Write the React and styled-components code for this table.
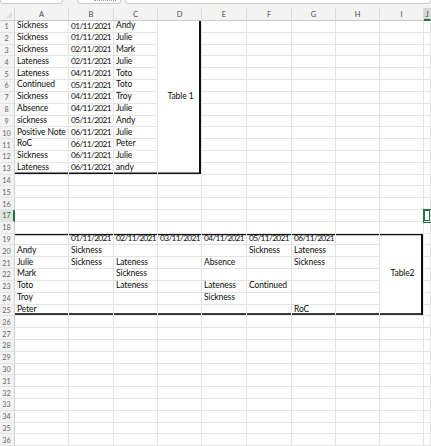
import React from 'react';
import styled, { createGlobalStyle, css } from 'styled-components';

const GlobalStyle = createGlobalStyle`
  html, body { margin: 0; padding: 0; background: #ffffff; }
  body { font-family: Lato, "Liberation Sans", sans-serif; }
`;

const Sheet = styled.div`
  width: 431px;
  height: 446px;
  overflow: hidden;
  background: #ffffff;
  display: flex;
  flex-direction: column;
`;

const TopBar = styled.div`
  height: 4px;
  flex: none;
  display: flex;
  align-items: flex-end;
  overflow: hidden;
  background: #f3f3f3;
`;

const Box = styled.div`
  height: 10px;
  flex: ${p => (p.$grow ? '1' : 'none')};
  width: ${p => (p.$w ? `${p.$w}px` : 'auto')};
  margin-left: ${p => p.$ml || 0}px;
  box-sizing: border-box;
  background: #ffffff;
  border: 1px solid #c9c9c9;
  border-radius: 0 0 3px 3px;
  display: flex;
  align-items: flex-end;
  padding: 0 0 2px 16px;
`;

const Dots = styled.span`
  display: block;
  width: 22px;
  height: 1px;
  border-bottom: 1px dotted #a0a0a0;
`;

const Gap = styled.div`
  height: 4px;
  flex: none;
  background: #f3f3f3;
`;

const Grid = styled.div`
  display: grid;
  grid-template-columns: 15px 54px 45px 44px 44px 45px 45px 44px 44px 44px 1fr;
  grid-template-rows: 13px repeat(36, 11.82px);
  flex: none;
`;

const Corner = styled.div`
  grid-row: 1;
  grid-column: 1;
  background: #f3f3f3;
  border-right: 1px solid #d4d4d4;
  border-bottom: 1px solid #c8c8c8;
  box-sizing: border-box;
  position: relative;
  &::after {
    content: '';
    position: absolute;
    right: 2px;
    bottom: 2px;
    border-left: 6px solid transparent;
    border-bottom: 6px solid #dcdcdc;
  }
`;

const ColHead = styled.div`
  grid-row: 1;
  box-sizing: border-box;
  background: ${p => (p.$active ? '#d6d6d6' : '#f3f3f3')};
  border-right: 1px solid #dcdcdc;
  border-bottom: ${p => (p.$active ? '2px solid #217346' : '1px solid #c8c8c8')};
  font-size: 7.5px;
  color: #4a4a4a;
  display: flex;
  align-items: center;
  justify-content: center;
  padding-top: 1px;
`;

const RowHead = styled.div`
  grid-column: 1;
  box-sizing: border-box;
  background: ${p => (p.$active ? '#e1e1e1' : '#f3f3f3')};
  border-right: ${p => (p.$active ? '2px solid #217346' : '1px solid #d0d0d0')};
  border-bottom: 1px solid #e4e4e4;
  font-size: 7.2px;
  color: ${p => (p.$active ? '#217346' : '#666666')};
  display: flex;
  align-items: center;
  justify-content: center;
  padding-top: 1px;
  padding-right: ${p => (p.$active ? 0 : 1)}px;
`;

const Cell = styled.div`
  box-sizing: border-box;
  border-right: 1px solid #e4e4e4;
  border-bottom: 1px solid #e4e4e4;
  font-size: ${p => (p.$date ? '8.3px' : '8.5px')};
  line-height: 1;
  color: #0c0c0c;
  white-space: nowrap;
  display: flex;
  align-items: ${p => (p.$center ? 'center' : 'flex-end')};
  justify-content: ${p => (p.$center ? 'center' : 'flex-start')};
  padding: 0 0 2px 2px;
  overflow: visible;
  letter-spacing: ${p => (p.$date ? '-0.6px' : '-0.1px')};
  ${p => p.$shadow && css`box-shadow: ${p.$shadow};`}
  ${p =>
    p.$selected &&
    css`
      position: relative;
      z-index: 1;
      box-shadow: 0 0 0 1px #217346, inset 0 0 0 1px #217346;
    `}
`;

const COLS = ['A', 'B', 'C', 'D', 'E', 'F', 'G', 'H', 'I', 'J'];

const table1 = [
  ['Sickness', '01/11/2021', 'Andy'],
  ['Sickness', '01/11/2021', 'Julie'],
  ['Sickness', '02/11/2021', 'Mark'],
  ['Lateness', '02/11/2021', 'Julie'],
  ['Lateness', '04/11/2021', 'Toto'],
  ['Continued', '05/11/2021', 'Toto'],
  ['Sickness', '04/11/2021', 'Troy'],
  ['Absence', '04/11/2021', 'Julie'],
  ['sickness', '05/11/2021', 'Andy'],
  ['Positive Note', '06/11/2021', 'Julie'],
  ['RoC', '06/11/2021', 'Peter'],
  ['Sickness', '06/11/2021', 'Julie'],
  ['Lateness', '06/11/2021', 'andy'],
];

const data = {};
table1.forEach((row, i) => {
  data[`A${i + 1}`] = row[0];
  data[`B${i + 1}`] = row[1];
  data[`C${i + 1}`] = row[2];
});
Object.assign(data, {
  D1: 'Table 1',
  B19: '01/11/2021', C19: '02/11/2021', D19: '03/11/2021', E19: '04/11/2021', F19: '05/11/2021', G19: '06/11/2021',
  A20: 'Andy', B20: 'Sickness', F20: 'Sickness', G20: 'Lateness',
  A21: 'Julie', B21: 'Sickness', C21: 'Lateness', E21: 'Absence', G21: 'Sickness',
  A22: 'Mark', C22: 'Sickness',
  A23: 'Toto', C23: 'Lateness', E23: 'Lateness', F23: 'Continued',
  A24: 'Troy', E24: 'Sickness',
  A25: 'Peter', G25: 'RoC',
  I19: 'Table2',
});

const merges = { D1: 13, I19: 7 };

function covered(col, row) {
  if (col === 'D' && row > 1 && row <= 13) return true;
  if (col === 'I' && row > 19 && row <= 25) return true;
  return false;
}

function edges(col, row) {
  const ci = COLS.indexOf(col);
  const s = [];
  if (row === 13 && ci <= 2) s.push('inset 0 -1.5px 0 #111');
  if (col === 'D' && row === 1) s.push('inset -2px 0 0 #111', 'inset 0 -1.5px 0 #111');
  if (row === 19 && ci <= 8) s.push('inset 0 1.2px 0 #111');
  if (row === 25 && ci <= 7) s.push('inset 0 -2px 0 #3a3a3a');
  if (col === 'I' && row === 19) s.push('inset -2px 0 0 #111', 'inset 0 -2px 0 #3a3a3a');
  return s.length ? s.join(', ') : undefined;
}

export default function App() {
  const cells = [];
  for (let r = 1; r <= 36; r++) {
    cells.push(
      <RowHead key={`r${r}`} $active={r === 17} style={{ gridRow: r + 1 }}>
        {r}
      </RowHead>
    );
    COLS.forEach((c, ci) => {
      if (covered(c, r)) return;
      const id = `${c}${r}`;
      const span = merges[id] || 1;
      const text = data[id] || '';
      cells.push(
        <Cell
          key={id}
          $center={span > 1}
          $date={/\d\d\/\d\d/.test(text)}
          $shadow={edges(c, r)}
          $selected={id === 'J17'}
          style={{ gridRow: `${r + 1} / span ${span}`, gridColumn: ci + 2 }}
        >
          {text}
        </Cell>
      );
    });
  }
  return (
    <>
      <GlobalStyle />
      <Sheet>
        <TopBar>
          <Box $w={63} />
          <Box $w={44} $ml={14}>
            <Dots />
          </Box>
          <Box $grow $ml={4} />
        </TopBar>
        <Gap />
        <Grid>
          <Corner />
          {COLS.map((c, i) => (
            <ColHead key={c} $active={c === 'J'} style={{ gridColumn: i + 2 }}>
              {c}
            </ColHead>
          ))}
          {cells}
        </Grid>
      </Sheet>
    </>
  );
}
